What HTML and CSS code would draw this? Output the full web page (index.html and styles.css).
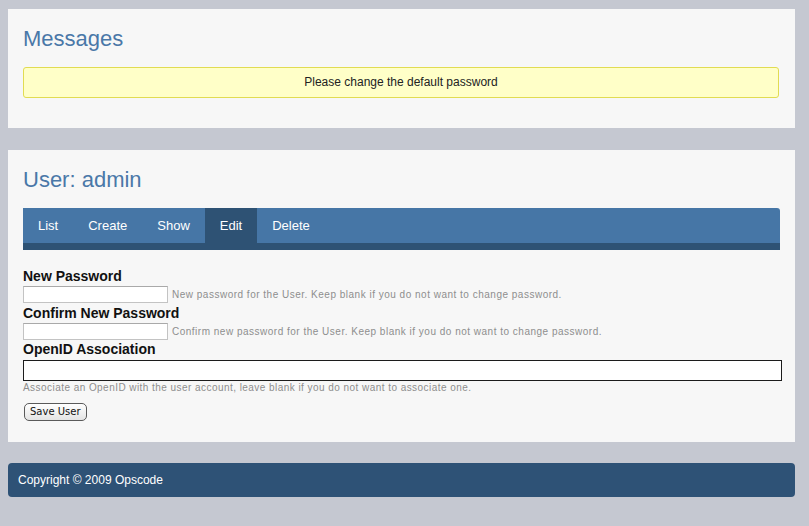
FILE: index.html
```html
<!DOCTYPE html>
<html>
<head>
<meta charset="utf-8">
<title>User: admin</title>
<link rel="stylesheet" href="styles.css">
</head>
<body>
<div class="page">
  <section class="box">
    <h2 class="title">Messages</h2>
    <div class="notice">Please change the default password</div>
  </section>

  <section class="box user-box">
    <h2 class="title">User: admin</h2>
    <nav class="tabs">
      <a class="tab" href="#">List</a>
      <a class="tab" href="#">Create</a>
      <a class="tab" href="#">Show</a>
      <a class="tab active" href="#">Edit</a>
      <a class="tab" href="#">Delete</a>
    </nav>
    <form class="form">
      <label class="label">New Password</label>
      <div class="row">
        <input class="field small" type="password">
        <span class="hint">New password for the User. Keep blank if you do not want to change password.</span>
      </div>
      <label class="label">Confirm New Password</label>
      <div class="row">
        <input class="field small" type="password">
        <span class="hint">Confirm new password for the User. Keep blank if you do not want to change password.</span>
      </div>
      <label class="label label-openid">OpenID Association</label>
      <input class="field wide" type="text">
      <div class="hint hint-block">Associate an OpenID with the user account, leave blank if you do not want to associate one.</div>
      <button class="save" type="button">Save User</button>
    </form>
  </section>

  <footer class="footer">Copyright © 2009 Opscode</footer>
</div>
</body>
</html>
```

FILE: styles.css
```css
html, body {
  margin: 0;
  padding: 0;
  background: #c5c8d1;
  font-family: "Liberation Sans", Arial, Helvetica, sans-serif;
}

.page {
  padding: 9px 14px 0 8px;
}

.box {
  background: #f7f7f7;
  padding: 17px 15px 15px 15px;
  margin-bottom: 22px;
}

.title {
  margin: 0;
  font-size: 22px;
  line-height: 26px;
  font-weight: normal;
  color: #4a78a8;
}

.notice {
  margin: 15px 1px 15px 0;
  height: 29px;
  line-height: 29px;
  border: 1px solid #e1dc52;
  border-radius: 3px;
  background: #ffffc8;
  text-align: center;
  font-size: 12px;
  color: #222;
}

.user-box {
  padding-bottom: 21px;
  margin-bottom: 21px;
}

.tabs {
  display: flex;
  margin: 15px 0 0 0;
  width: 757px;
  height: 35px;
  background: #4676a6;
  border-bottom: 7px solid #2e5274;
  border-radius: 0 3px 0 0;
}

.tab {
  display: block;
  padding: 0 15px;
  line-height: 35px;
  font-size: 13px;
  color: #ffffff;
  text-decoration: none;
}

.tab.active {
  background: #2e5274;
}

.form {
  display: flex;
  flex-direction: column;
  align-items: flex-start;
  margin-top: 18px;
}

.label {
  display: block;
  font-size: 14px;
  line-height: 16px;
  font-weight: bold;
  color: #111;
}

.row {
  display: flex;
  align-items: center;
  margin: 2px 0 2px 0;
}

.field {
  box-sizing: border-box;
  margin: 0;
  padding: 0 2px;
  background: #fff;
  font-family: "Liberation Sans", Arial, sans-serif;
  font-size: 12px;
  outline: none;
}

.field.small {
  width: 145px;
  height: 17px;
  border: 1px solid #c3c3c3;
  border-top-color: #a9a9a9;
}

.hint {
  margin-left: 4px;
  font-size: 10px;
  line-height: 12px;
  letter-spacing: 0.5px;
  color: #8e8e8e;
}

.label-openid {
  margin-top: -1px;
}

.field.wide {
  width: 759px;
  height: 21px;
  margin-top: 3px;
  border: 1px solid #1c1c1c;
}

.hint-block {
  margin: 0;
  line-height: 13px;
  letter-spacing: 0.45px;
}

.save {
  margin: 9px 0 0 1px;
  height: 18px;
  padding: 0 5px;
  border: 1px solid #5a5a5a;
  border-radius: 5px;
  background: linear-gradient(#ffffff, #e4e4e4);
  font-family: "DejaVu Sans", "Lucida Grande", sans-serif;
  font-size: 10px;
  line-height: 16px;
  color: #111;
}

.footer {
  height: 34px;
  line-height: 34px;
  padding: 0 10px;
  background: #2e5276;
  border-radius: 4px;
  color: #ffffff;
  font-size: 12px;
}
```
